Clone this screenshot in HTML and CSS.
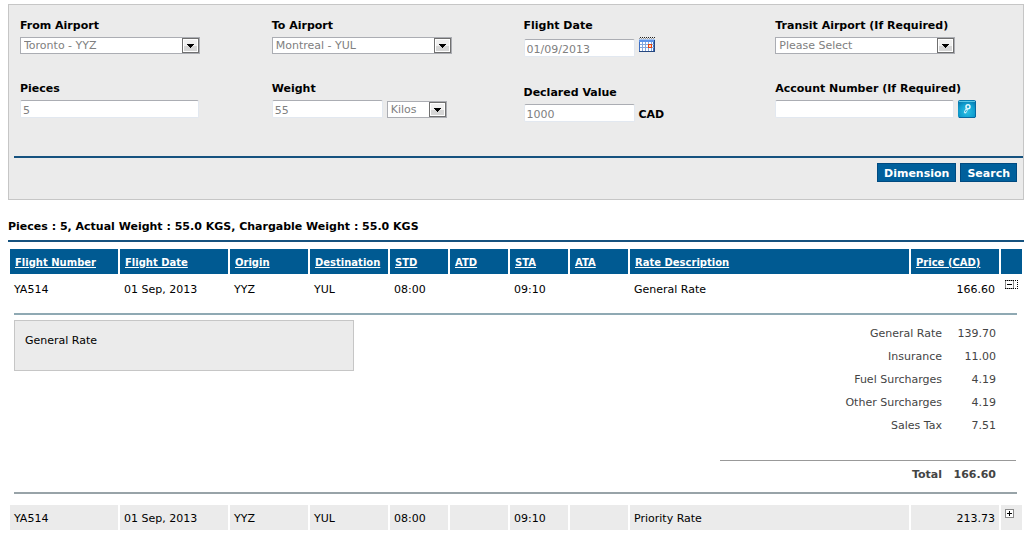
FILE: index.html
```html
<!DOCTYPE html>
<html lang="en">
<head>
    <meta charset="UTF-8">
    <meta name="viewport" content="width=device-width, initial-scale=1.0">
    <title>Flight Rates</title>
    <link rel="stylesheet" href="styles.css">
</head>
<body>

    <form class="search-panel">
        <div class="fields">
            <div class="field-column">
                <div class="field">
                    <label for="fromAirport">From Airport</label>
                    <div class="control">
                        <select id="fromAirport" class="wide-select">
                            <option>Toronto - YYZ</option>
                        </select>
                    </div>
                </div>
                <div class="field">
                    <label for="pieces">Pieces</label>
                    <div class="control">
                        <input type="text" id="pieces" class="wide-input" value="5">
                    </div>
                </div>
            </div>

            <div class="field-column">
                <div class="field">
                    <label for="toAirport">To Airport</label>
                    <div class="control">
                        <select id="toAirport" class="wide-select">
                            <option>Montreal - YUL</option>
                        </select>
                    </div>
                </div>
                <div class="field">
                    <label for="weight">Weight</label>
                    <div class="control">
                        <input type="text" id="weight" class="short-input" value="55">
                        <select class="unit-select" aria-label="Weight unit">
                            <option>Kilos</option>
                        </select>
                    </div>
                </div>
            </div>

            <div class="field-column">
                <div class="field">
                    <label for="flightDate">Flight Date</label>
                    <div class="control control-date">
                        <input type="text" id="flightDate" class="short-input" value="01/09/2013">
                        <button type="button" class="icon-button calendar-button" aria-label="Choose date">
                            <svg width="16" height="16" viewBox="0 0 16 16" shape-rendering="crispEdges">
                                <rect x="0" y="2" width="16" height="13" fill="#3f6fc0"/>
                                <rect x="0" y="2" width="16" height="1" fill="#a8c6f2"/>
                                <rect x="0" y="3" width="15" height="2" fill="#5b93ea"/>
                                <path d="M1 0.5H16" stroke="#222" stroke-dasharray="1 1"/>
                                <path d="M0 1.5H16" stroke="#999" stroke-dasharray="1 1"/>
                                <rect x="1" y="5" width="13" height="9" fill="#fff"/>
                                <path d="M3.5 5V14M6.5 5V14M9.5 5V14M12.5 5V14M1 7.5H15M1 10.5H15" stroke="#83a8dd" fill="none"/>
                                <path d="M15.5 3V15M0 14.5H16" stroke="#26477e"/>
                                <rect x="9" y="7" width="4" height="4" fill="#e8440c"/>
                                <rect x="10" y="8" width="2" height="2" fill="#ffd9c4"/>
                            </svg>
                        </button>
                    </div>
                </div>
                <div class="field">
                    <label for="declaredValue">Declared Value</label>
                    <div class="control">
                        <input type="text" id="declaredValue" class="short-input" value="1000">
                        <span class="currency">CAD</span>
                    </div>
                </div>
            </div>

            <div class="field-column">
                <div class="field">
                    <label for="transitAirport">Transit Airport (If Required)</label>
                    <div class="control">
                        <select id="transitAirport" class="wide-select">
                            <option>Please Select</option>
                        </select>
                    </div>
                </div>
                <div class="field">
                    <label for="accountNumber">Account Number (If Required)</label>
                    <div class="control">
                        <input type="text" id="accountNumber" class="wide-input" value="">
                        <button type="button" class="icon-button" aria-label="Find account">
                            <svg width="18" height="18" viewBox="0 0 18 18">
                                <defs>
                                    <radialGradient id="lookupFill" cx="0.5" cy="0.65" r="0.7">
                                        <stop offset="0" stop-color="#2bc0e4"/>
                                        <stop offset="0.6" stop-color="#109fd0"/>
                                        <stop offset="1" stop-color="#0878ae"/>
                                    </radialGradient>
                                </defs>
                                <rect x="0" y="0" width="18" height="18" rx="2" fill="url(#lookupFill)"/>
                                <path d="M1 1.5H17" stroke="#5cc8e6"/>
                                <path d="M1 17.5H17M17.5 1V17" stroke="#0768a0"/>
                                <circle cx="10" cy="6.8" r="2" fill="#18a4d2" stroke="#e4f8fd" stroke-width="1.5"/>
                                <path d="M8.8 9.2L7.2 12.2" stroke="#c8effa" stroke-width="2.6" stroke-linecap="round"/>
                                <path d="M8.4 10L7.4 12" stroke="#2a9fc6" stroke-width="1"/>
                            </svg>
                        </button>
                    </div>
                </div>
            </div>
        </div>

        <div class="actions">
            <button type="button" class="action-button">Dimension</button>
            <button type="button" class="action-button">Search</button>
        </div>
    </form>

    <h1 class="summary">Pieces : 5, Actual Weight : 55.0 KGS, Chargable Weight : 55.0 KGS</h1>

    <table class="flights">
        <colgroup>
            <col class="col-date">
            <col class="col-date">
            <col class="col-airport">
            <col class="col-airport">
            <col class="col-time">
            <col class="col-time">
            <col class="col-time">
            <col class="col-time">
            <col>
            <col class="col-price">
            <col class="col-toggle">
        </colgroup>
        <thead>
            <tr>
                <th><a href="#">Flight Number</a></th>
                <th><a href="#">Flight Date</a></th>
                <th><a href="#">Origin</a></th>
                <th><a href="#">Destination</a></th>
                <th><a href="#">STD</a></th>
                <th><a href="#">ATD</a></th>
                <th><a href="#">STA</a></th>
                <th><a href="#">ATA</a></th>
                <th><a href="#">Rate Description</a></th>
                <th><a href="#">Price (CAD)</a></th>
                <th></th>
            </tr>
        </thead>
        <tbody>
            <tr class="flight-row">
                <td>YA514</td>
                <td>01 Sep, 2013</td>
                <td>YYZ</td>
                <td>YUL</td>
                <td>08:00</td>
                <td></td>
                <td>09:10</td>
                <td></td>
                <td>General Rate</td>
                <td class="price">166.60</td>
                <td class="toggle">
                    <button type="button" class="icon-button" aria-label="Hide charges">
                        <svg width="13" height="9" viewBox="0 0 13 9" shape-rendering="crispEdges">
                            <rect x="0.5" y="0.5" width="8" height="8" fill="#fff" stroke="#8a8a8a"/>
                            <path d="M2 4.5H7" stroke="#000"/>
                            <path d="M0 0.5H13M0 8.5H13M12.5 0V9" stroke="#000" stroke-dasharray="1 1" fill="none"/>
                        </svg>
                    </button>
                </td>
            </tr>
            <tr>
                <td colspan="11" class="detail">
                    <div class="detail-body">
                        <div class="rate-note">General Rate</div>
                        <table class="charges">
                            <tbody>
                                <tr><th>General Rate</th><td>139.70</td></tr>
                                <tr><th>Insurance</th><td>11.00</td></tr>
                                <tr><th>Fuel Surcharges</th><td>4.19</td></tr>
                                <tr><th>Other Surcharges</th><td>4.19</td></tr>
                                <tr class="last-charge"><th>Sales Tax</th><td>7.51</td></tr>
                            </tbody>
                            <tfoot>
                                <tr><th>Total</th><td>166.60</td></tr>
                            </tfoot>
                        </table>
                    </div>
                </td>
            </tr>
            <tr class="flight-row shaded">
                <td>YA514</td>
                <td>01 Sep, 2013</td>
                <td>YYZ</td>
                <td>YUL</td>
                <td>08:00</td>
                <td></td>
                <td>09:10</td>
                <td></td>
                <td>Priority Rate</td>
                <td class="price">213.73</td>
                <td class="toggle">
                    <button type="button" class="icon-button" aria-label="Show charges">
                        <svg width="9" height="9" viewBox="0 0 9 9" shape-rendering="crispEdges">
                            <rect x="0.5" y="0.5" width="8" height="8" fill="#fff" stroke="#8a8a8a"/>
                            <path d="M2 4.5H7M4.5 2V7" stroke="#000"/>
                        </svg>
                    </button>
                </td>
            </tr>
        </tbody>
    </table>

</body>
</html>
```
FILE: styles.css
```css
* {
    box-sizing: border-box;
}
body {
    font-family: Verdana, "DejaVu Sans", sans-serif;
    font-size: 11px;
    line-height: 16px;
    background: #fff;
    color: #000;
    margin: 4px 11px 0 8px;
}
input,
select,
button {
    font-family: inherit;
    font-size: 11px;
    margin: 0;
}

/* Search form */
.search-panel {
    background: #ebebeb;
    border: 1px solid #c6c6c6;
    padding: 13px 0 17px 5px;
}
.fields {
    display: grid;
    grid-template-columns: repeat(4, 1fr);
    padding: 0 2px 34px 0;
}
.field-column {
    display: flex;
    flex-direction: column;
    gap: 26px;
    padding-left: 6px;
}
.field label {
    display: block;
    font-weight: bold;
    margin-bottom: 3px;
}
.control {
    display: flex;
    align-items: flex-end;
    gap: 4px;
    height: 18px;
}
.control-date {
    align-items: center;
    height: 22px;
}
input {
    height: 18px;
    padding: 2px 2px 0;
    border: 1px solid #e2e8f0;
    border-top-color: #abadb3;
    border-radius: 2px;
    background: #fff;
    color: #808080;
}
select {
    height: 17px;
    padding: 0 18px 0 3px;
    border: 1px solid #abadb3;
    border-radius: 0;
    appearance: none;
    color: #808080;
    background: #fff url("data:image/svg+xml,%3Csvg xmlns='http://www.w3.org/2000/svg' width='17' height='15' shape-rendering='crispEdges'%3E%3Crect x='.5' y='.5' width='16' height='14' fill='%23fff' stroke='%23707070'/%3E%3Crect x='2' y='2' width='13' height='6' fill='%23f0f0f0'/%3E%3Crect x='2' y='8' width='13' height='5' fill='%23d6d6d6'/%3E%3Cpath d='M5 6h7v1H5zM6 7h5v1H6zM7 8h3v1H7zM8 9h1v1H8z'/%3E%3C/svg%3E") no-repeat right top;
}
.wide-select {
    align-self: flex-start;
    width: 180px;
}
.wide-input {
    width: 179px;
}
.short-input {
    width: 111px;
}
.unit-select {
    width: 60px;
}
.currency {
    font-weight: bold;
    line-height: 14px;
}
.icon-button {
    display: block;
    padding: 0;
    border: 0;
    background: none;
    cursor: pointer;
}
.icon-button svg {
    display: block;
}
.calendar-button {
    align-self: flex-start;
}
.actions {
    display: flex;
    justify-content: flex-end;
    gap: 4px;
    border-top: 2px solid #15527f;
    padding: 5px 6px 0 0;
}
.action-button {
    height: 19px;
    padding: 1px 6px 0;
    border: 1px solid #004a80;
    background: #00609c;
    color: #fff;
    font-weight: bold;
    cursor: pointer;
}

/* Results */
.summary {
    font-size: 11px;
    line-height: 16px;
    margin: 19px 0 5px;
    padding-bottom: 5px;
    border-bottom: 2px solid #15527f;
}
.flights {
    width: 100%;
    table-layout: fixed;
    border-spacing: 2px;
}
.flights td,
.flights th {
    height: 25px;
    text-align: left;
}
.flights thead th {
    background: #005a92;
    padding: 2px 0 0 5px;
    font-size: 10px;
}
.flights thead a {
    color: #fff;
}
.flight-row td {
    padding: 3px 4px 0;
}
.shaded td {
    background: #ebebeb;
}
.flights .price {
    text-align: right;
}
.flights .toggle {
    vertical-align: top;
    padding-top: 4px;
}
.col-date {
    width: 108px;
}
.col-airport {
    width: 78px;
}
.col-time {
    width: 58px;
}
.col-price {
    width: 88px;
}
.col-toggle {
    width: 21px;
}

/* Charges of the opened flight */
.flights .detail {
    padding: 10px 5px 9px 4px;
}
.detail-body {
    display: flex;
    justify-content: space-between;
    align-items: flex-start;
    border-top: 2px solid #8fa9b3;
    border-bottom: 2px solid #98a3a8;
    padding: 5px 1px 5px 0;
}
.rate-note {
    width: 340px;
    min-height: 51px;
    padding: 12px 10px;
    border: 1px solid #c6c6c6;
    background: #ebebeb;
}
.charges {
    width: 296px;
    border-collapse: collapse;
    color: #444;
}
.charges th,
.charges td {
    height: 23px;
    padding: 4px 0 0;
    text-align: right;
    font-weight: normal;
}
.charges td {
    width: 74px;
    padding-right: 20px;
}
.charges .last-charge th,
.charges .last-charge td {
    height: 48px;
    vertical-align: top;
    padding-top: 6px;
}
.charges tfoot th,
.charges tfoot td {
    height: 27px;
    padding-top: 2px;
    border-top: 1px solid #999;
    font-weight: bold;
}
```
